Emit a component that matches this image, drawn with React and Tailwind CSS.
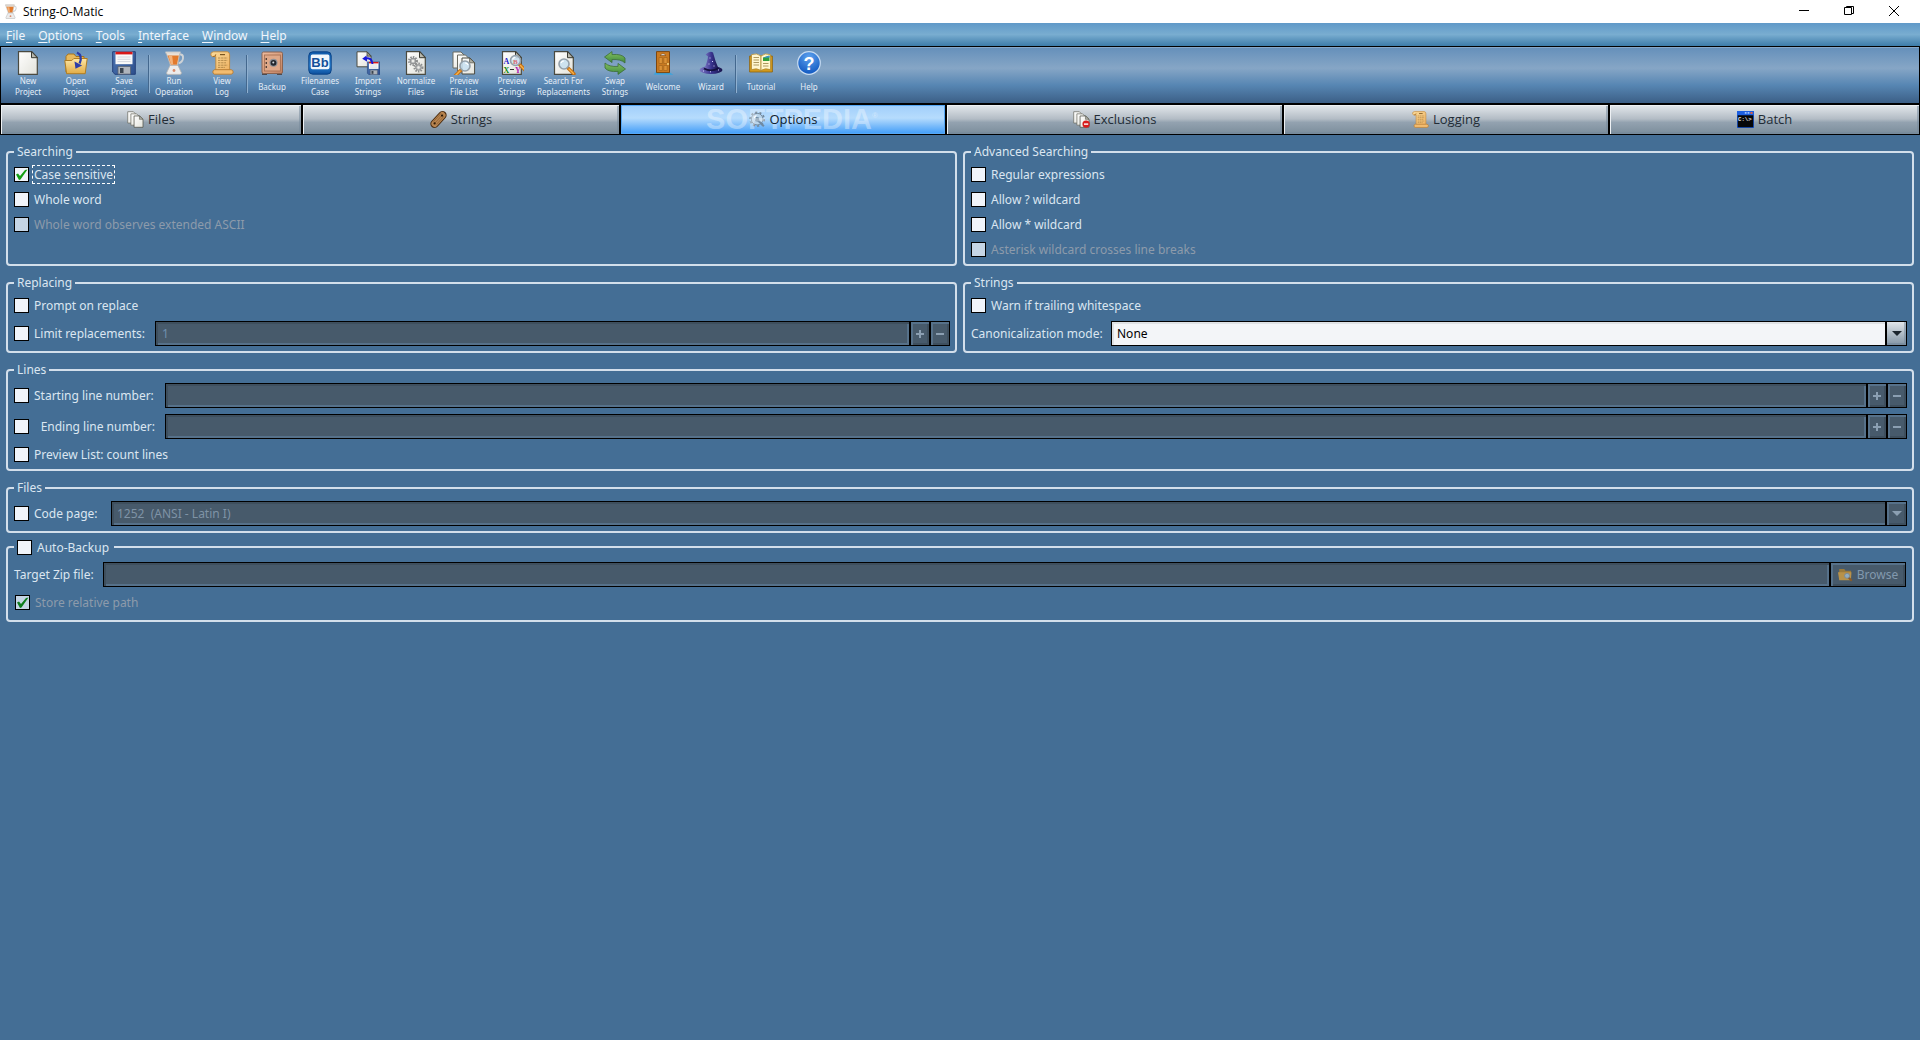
import React, { useState } from 'react';

const Svg = ({ size = 24, className = '', children }) => (
    <svg width={size} height={size} viewBox="0 0 24 24" className={`shrink-0 ${className}`} aria-hidden="true">
        {children}
    </svg>
);

const Gradients = () => (
    <svg width="0" height="0" className="absolute" aria-hidden="true">
        <defs>
            <linearGradient id="paper" x1="0" y1="0" x2="1" y2="1">
                <stop offset="0" stopColor="#ffffff" />
                <stop offset="1" stopColor="#e2e2da" />
            </linearGradient>
            <linearGradient id="gold" x1="0" y1="0" x2="0" y2="1">
                <stop offset="0" stopColor="#fde7a6" />
                <stop offset="1" stopColor="#e2ac45" />
            </linearGradient>
            <linearGradient id="scroll" x1="0" y1="0" x2="1" y2="1">
                <stop offset="0" stopColor="#fbdc9c" />
                <stop offset="1" stopColor="#eeb263" />
            </linearGradient>
            <linearGradient id="disk" x1="0" y1="0" x2="1" y2="1">
                <stop offset="0" stopColor="#4d77b5" />
                <stop offset="1" stopColor="#2e4f8c" />
            </linearGradient>
            <linearGradient id="safe" x1="0" y1="0" x2="1" y2="1">
                <stop offset="0" stopColor="#f0bd9f" />
                <stop offset="1" stopColor="#c08060" />
            </linearGradient>
            <linearGradient id="blueBox" x1="0" y1="0" x2="0" y2="1">
                <stop offset="0" stopColor="#0f58a8" />
                <stop offset="0.6" stopColor="#2c86d8" />
                <stop offset="1" stopColor="#0d4f9c" />
            </linearGradient>
            <linearGradient id="green" x1="0" y1="0" x2="0" y2="1">
                <stop offset="0" stopColor="#86bf62" />
                <stop offset="1" stopColor="#3d8a3c" />
            </linearGradient>
            <linearGradient id="hat" x1="0" y1="0" x2="1" y2="0">
                <stop offset="0" stopColor="#7d79c4" />
                <stop offset="0.5" stopColor="#3a3590" />
                <stop offset="1" stopColor="#17144c" />
            </linearGradient>
            <radialGradient id="helpBall" cx="0.5" cy="0.25" r="0.8">
                <stop offset="0" stopColor="#5ea2ee" />
                <stop offset="1" stopColor="#0a52bd" />
            </radialGradient>
        </defs>
    </svg>
);

/* Pieces shared by several icons */
const Page = () => (
    <>
        <path d="M2.5 .7h13.3l5.5 5.8v16.8H2.5z" fill="url(#paper)" stroke="#4a4a40" strokeWidth="1.2" />
        <path d="M15.5 .7v6h5.8z" fill="#b9b9ae" stroke="#3a3a32" />
    </>
);

const Glass = ({ x = 0, y = 0 }) => (
    <g transform={`translate(${x} ${y})`}>
        <path d="M4 4l6 6" stroke="#c46f12" strokeWidth="3.4" strokeLinecap="round" />
        <path d="M5 5l4.5 4.5" stroke="#f7b24a" strokeWidth="1.4" strokeLinecap="round" />
        <circle r="5" fill="#c7dff0" fillOpacity="0.85" stroke="#94a0aa" strokeWidth="1.6" />
        <path d="M-3-1a3 3 0 0 1 3-2" stroke="#fff" strokeWidth="1.2" fill="none" />
    </g>
);

const FloppyShape = () => (
    <>
        <path d="M.7 .7h22.6v22.6H3L.7 21z" fill="url(#disk)" stroke="#24407a" />
        <path d="M3.5 .8h17v12.4h-17z" fill="#fafafa" />
        <path d="M3.5 .8h17v2.6h-17z" fill="#d81818" />
        <path d="M5.5 6h13M5.5 8.3h13M5.5 10.6h13" stroke="#c9ced6" strokeWidth="0.8" />
        <path d="M6 15.5h12.5v7.6H6z" fill="#aeb4bc" stroke="#5c6570" strokeWidth="0.8" />
        <path d="M8 17h3.5v5H8z" fill="#3a4450" />
    </>
);

const PageStack = () => (
    <>
        <path d="M1 1h8l4 4v12H1z" fill="url(#paper)" stroke="#6a6a60" />
        <path d="M5.5 4h8l4 4v12h-12z" fill="url(#paper)" stroke="#6a6a60" />
        <path d="M10 7h8l4.6 4.6V23H10z" fill="url(#paper)" stroke="#4a4a40" />
        <path d="M17.6 7v4.8h5z" fill="#b0b0a6" stroke="#4a4a40" strokeWidth="0.7" />
    </>
);

const Blender = ({ size, className }) => (
    <Svg size={size} className={className}>
        <path d="M16 3.5h3q2.5.5 2 4t-4.5 5" fill="none" stroke="#cfd3d6" strokeWidth="1.8" />
        <path d="M4 1.5h14l-2.5 13h-7z" fill="#e9e2da" stroke="#b9b3ac" strokeWidth="0.8" />
        <path d="M5.6 4.5h11.2l-1.9 9.2H9z" fill="#e27a2c" />
        <path d="M6.6 5h3.6l1 8.5H9z" fill="#f4b27a" />
        <path d="M3.5 .6h15v1.8h-15z" fill="#d9d4cf" />
        <path d="M8 14.4h8l3.4 7.4q.2 1.6-1.4 1.6H6q-1.8 0-1.4-1.6z" fill="#ececec" stroke="#b3b3b3" strokeWidth="0.8" />
        <circle cx="12" cy="19.5" r="1.4" fill="#d98a6a" />
    </Svg>
);

const NewIcon = () => <Svg><Page /></Svg>;

const OpenIcon = () => (
    <Svg>
        <path d="M2 21V5.5L4 3h6l2 2.5h8V12" fill="#e8b95c" stroke="#a8741c" />
        <path d="M.8 9.5h7l2-2h13.4l-2 15.2H2.6z" fill="url(#gold)" stroke="#b07d22" />
        <path d="M13 1.5q6 3 2.6 11" fill="none" stroke="#2b3da8" strokeWidth="2.2" />
        <path d="M10.5 10.5l1 7.3 6.6-3.4z" fill="#2b3da8" />
    </Svg>
);

const SaveIcon = () => <Svg><FloppyShape /></Svg>;

const ScrollIcon = ({ size }) => (
    <Svg size={size}>
        <path d="M3.6 .8h13.8q2.2.3 2.2 3v15.4H5.8V5.6H2.6Q.6 5 .8 3T3.6 .8z" fill="url(#scroll)" stroke="#c48a3c" strokeWidth="0.9" />
        <path d="M5.8 3.3q.4 2.3-3 2.3" fill="none" stroke="#a96d24" />
        <path d="M4.6 18.7h16.6q2 .5 2 2.3t-2 2.2H4.6q-1.8-.4-1.8-2.2t1.8-2.3z" fill="#f3bc70" stroke="#b87a30" strokeWidth="0.9" />
        <path d="M10 3.6h5" stroke="#7a5520" strokeWidth="1.2" />
        <path d="M8 7h9.5M8 9.4h9.5M8 11.8h8M8 14.2h9.5M8 16.4h7" stroke="#ad8446" strokeWidth="0.9" strokeDasharray="2.4 .7" />
    </Svg>
);

const BackupIcon = () => (
    <Svg>
        <path d="M2 22h5v2H2zM17 22h5v2h-5z" fill="#4c4a50" />
        <rect x="2" y="1" width="20.5" height="21.5" rx="1.5" fill="url(#safe)" stroke="#8a6350" />
        <rect x="4.4" y="4" width="16" height="16" fill="#dfa888" stroke="#a87052" strokeWidth="0.9" />
        <circle cx="13.5" cy="11.8" r="4" fill="#8b8f96" />
        <circle cx="13.5" cy="11.8" r="2.9" fill="#23272d" />
        <circle cx="13.3" cy="11.6" r="1" fill="#d5d9de" />
        <path d="M6.3 7v2M6.3 11v2M6.3 15v2" stroke="#4d3b33" strokeWidth="1.3" />
    </Svg>
);

const CaseIcon = () => (
    <Svg>
        <rect x=".8" y=".8" width="22.4" height="22.4" rx="4" fill="url(#blueBox)" stroke="#0b4488" />
        <rect x="2.8" y="3.4" width="18.6" height="14.8" rx="1.6" fill="#f2f7fc" />
        <text x="12" y="15.6" textAnchor="middle" fontFamily="Liberation Sans, Arial, sans-serif" fontSize="13" fontWeight="700" fill="#14509a">Bb</text>
    </Svg>
);

const ImportIcon = () => (
    <Svg>
        <path d="M1 .8h10l4 4v11H1z" fill="url(#paper)" stroke="#4a4a40" />
        <path d="M11 .8v4.4h4z" fill="#9a9a90" stroke="#3a3a32" strokeWidth="0.7" />
        <g transform="translate(11 10.5) scale(.56)"><FloppyShape /></g>
        <path d="M9 7.5q7-1.5 7.5 5.5" fill="none" stroke="#1616d8" strokeWidth="2" />
        <path d="M10.5 4.5L6.2 7.8l5 3z" fill="#1616d8" />
    </Svg>
);

const Gear = ({ cx, cy, r }) => (
    <>
        <circle cx={cx} cy={cy} r={r} fill="none" stroke="#8d8f90" strokeWidth="2" strokeDasharray="1.5 1.1" />
        <circle cx={cx} cy={cy} r={r - 1.2} fill="#b9bbbc" stroke="#8b8d8e" strokeWidth="1" />
        <circle cx={cx} cy={cy} r="1.2" fill="#eeeeea" />
    </>
);

const NormalizeIcon = () => (
    <Svg>
        <Page />
        <Gear cx={9} cy={10} r={4} />
        <Gear cx={14.5} cy={16.5} r={4} />
    </Svg>
);

const PreviewListIcon = () => (
    <Svg>
        <PageStack />
        <g transform="translate(13 15) scale(-1 1)"><Glass /></g>
    </Svg>
);

const PreviewStringsIcon = () => (
    <Svg>
        <Page />
        <g fontFamily="Liberation Serif, serif" fontSize="8" fontWeight="700">
            <text x="3.5" y="13" fill="#1c1cc8">A</text>
            <text x="3.5" y="21.5" fill="#108a10">X</text>
            <text x="15" y="21.5" fill="#b01cb0">Y</text>
        </g>
        <path d="M10 18.5h4" stroke="#333" />
        <Glass x={15.5} y={9.5} />
        <text x="13" y="12.5" fontFamily="Liberation Serif, serif" fontSize="7" fontWeight="700" fill="#d86a70">B</text>
    </Svg>
);

const SearchIcon = () => (
    <Svg>
        <Page />
        <Glass x={12} y={13} />
    </Svg>
);

const SwapIcon = () => (
    <Svg>
        <path d="M1.5 6L9 .6v3q9.500-1 13 3.400v5q-4-4-13-3.400v3z" fill="url(#green)" stroke="#3c6d36" strokeWidth="0.8" />
        <path d="M22.5 18L15 23.400v-3Q5.500 21.400 2 17v-5q4 4 13 3.400v-3z" fill="url(#green)" stroke="#3c6d36" strokeWidth="0.8" />
    </Svg>
);

const DoorIcon = () => (
    <Svg>
        <path d="M5 20.500h12l5.500 3.300H2.500z" fill="#3ba3dc" />
        <path d="M5.500 .6h13v21h-13z" fill="#c97a22" stroke="#7d4710" />
        <path d="M9 4.500q3-3.600 6 0z" fill="#dfeefa" stroke="#7d4710" strokeWidth="0.6" />
        <path d="M8 6.500h3.400v6H8zM12.800 6.500h3.400v6h-3.400zM8 14.500h3.400v5H8zM12.800 14.500h3.400v5h-3.400z" fill="#dc9236" stroke="#a8681e" strokeWidth="0.8" />
        <circle cx="17" cy="13" r=".9" fill="#ffe38a" />
    </Svg>
);

const WizardIcon = () => (
    <Svg>
        <ellipse cx="12" cy="19" rx="11.5" ry="4" fill="url(#hat)" />
        <path d="M5 18Q8.500 11 9 5.500L6.500 3.500Q11-.5 14 1.500q2 8 5.500 16-7 4.500-14.500.5z" fill="url(#hat)" />
        <path d="M5 17.500q7 4 14.500-.3" fill="none" stroke="#15123f" strokeWidth="1.8" />
        <path d="M10.500 7h1M13 10.500h1M9.500 13h1M14.500 15h1M4 20h1M11 20.800h1M19 19h1" stroke="#d5d2ff" strokeWidth="1" />
    </Svg>
);

const BookIcon = () => (
    <Svg>
        <path d="M.6 5h22.800v16H.6z" fill="#d29a1e" stroke="#8d620c" strokeWidth="0.8" />
        <path d="M12 5Q8 1.600 2.500 3.600v15Q8 16.600 12 19.500z" fill="#fff6cf" stroke="#b08a34" strokeWidth="0.8" />
        <path d="M12 5q4-3.400 9.500-1.400v15Q16 16.600 12 19.500z" fill="#fff6cf" stroke="#b08a34" strokeWidth="0.8" />
        <path d="M4.500 6.500h5.500M4.500 9h5.500M4.500 11.500h5.500M4.500 14h5.500M14 12.500h5.500M14 15h5.500" stroke="#a58e54" strokeWidth="0.9" />
        <path d="M14 10V6.500l6.500-2V10z" fill="#2f9e3a" />
        <path d="M14 6.800l6.500-2.300v2z" fill="#3a8fe0" />
    </Svg>
);

const HelpIcon = () => (
    <Svg>
        <circle cx="12" cy="12" r="11.3" fill="url(#helpBall)" stroke="#c8dcf2" strokeWidth="1.2" />
        <text x="12" y="18.5" textAnchor="middle" fontFamily="Liberation Sans, Arial, sans-serif" fontSize="18" fontWeight="700" fill="#fff">?</text>
    </Svg>
);

const FilesIcon = () => <Svg size={17}><PageStack /></Svg>;

const StringIcon = () => (
    <Svg size={17}>
        <path d="M6.500 18L17.500 6" stroke="#4a2c10" strokeWidth="12" strokeLinecap="round" />
        <path d="M6.500 18L17.500 6" stroke="#b98550" strokeWidth="9" strokeLinecap="round" />
        <path d="M9 19L20 7M5 15L16 3M7 17L18 5" stroke="#84562a" strokeWidth="0.9" />
        <circle cx="6.5" cy="17.5" r="1.6" fill="#2c1a08" />
        <circle cx="17" cy="6.5" r="1.6" fill="#2c1a08" />
    </Svg>
);

const OptionsIcon = () => (
    <Svg size={17}>
        <circle cx="11.5" cy="11.5" r="9.8" fill="none" stroke="#72889b" strokeWidth="2.4" strokeDasharray="3 3.15" />
        <circle cx="11.5" cy="11.5" r="8.2" fill="#b9d5ec" stroke="#72889b" strokeWidth="1.4" />
        <path d="M10 8l4 1 .5 4 7.500 7.500-2 2-7.500-7.500-4-1z" fill="#6f8aa3" />
        <path d="M7.500 10a4 4 0 0 1 3-3.500" stroke="#fff" strokeWidth="1.6" fill="none" />
    </Svg>
);

const ExclusionsIcon = () => (
    <Svg size={17}>
        <PageStack />
        <circle cx="18.5" cy="18.5" r="5.2" fill="#d81c1c" />
        <path d="M15.500 18.500h6" stroke="#fff" strokeWidth="2" />
    </Svg>
);

const BatchIcon = () => (
    <Svg size={17}>
        <path d="M0 0h24v24H0z" fill="#1d5fe0" />
        <path d="M1 6h22v17H1z" fill="#060608" />
        <path d="M11 1.500h2.500v2.500H11zM15 1.500h2.500v2.500H15z" fill="#9dc1ff" />
        <path d="M19 1.500h3v2.500h-3z" fill="#f0603c" />
        <text x="1.5" y="13.5" fontFamily="Liberation Mono, monospace" fontSize="8" fontWeight="700" fill="#e6e6e6">C:\&gt;</text>
    </Svg>
);

const BrowseIcon = () => (
    <Svg size={15}>
        <path d="M2 20V3h8l2 3h9v14z" fill="#9a7a3c" />
        <path d="M0 8.500h21.500L20.500 21H2z" fill="#b8924a" />
        <path d="M16 16l6 6" stroke="#8a5a28" strokeWidth="3" />
        <circle cx="14.5" cy="14" r="4" fill="#93adc0" stroke="#7b8790" strokeWidth="1.5" />
    </Svg>
);

const menus = ['File', 'Options', 'Tools', 'Interface', 'Window', 'Help'];

const tools = [
    { lines: ['New', 'Project'], Icon: NewIcon },
    { lines: ['Open', 'Project'], Icon: OpenIcon },
    { lines: ['Save', 'Project'], Icon: SaveIcon },
    null,
    { lines: ['Run', 'Operation'], Icon: Blender },
    { lines: ['View', 'Log'], Icon: ScrollIcon },
    null,
    { lines: ['Backup'], Icon: BackupIcon },
    { lines: ['Filenames', 'Case'], Icon: CaseIcon },
    { lines: ['Import', 'Strings'], Icon: ImportIcon },
    { lines: ['Normalize', 'Files'], Icon: NormalizeIcon },
    { lines: ['Preview', 'File List'], Icon: PreviewListIcon },
    { lines: ['Preview', 'Strings'], Icon: PreviewStringsIcon },
    { lines: ['Search For', 'Replacements'], Icon: SearchIcon, wide: true },
    { lines: ['Swap', 'Strings'], Icon: SwapIcon },
    { lines: ['Welcome'], Icon: DoorIcon },
    { lines: ['Wizard'], Icon: WizardIcon },
    null,
    { lines: ['Tutorial'], Icon: BookIcon },
    { lines: ['Help'], Icon: HelpIcon },
];

const tabs = [
    { name: 'Files', Icon: FilesIcon, width: 'flex-[300]' },
    { name: 'Strings', Icon: StringIcon, width: 'flex-[316]' },
    { name: 'Options', Icon: OptionsIcon, width: 'flex-[324]' },
    { name: 'Exclusions', Icon: ExclusionsIcon, width: 'flex-[335]' },
    { name: 'Logging', Icon: ScrollIcon, width: 'flex-[324]' },
    { name: 'Batch', Icon: BatchIcon, width: 'flex-[309]' },
];

const sunken = 'border border-black bg-[#475a6b] shadow-[inset_2px_2px_0_#3e4f5e,inset_-2px_-2px_0_#56718a]';
const raised = 'border border-black bg-[#475a6b] shadow-[inset_2px_2px_0_#56718a,inset_-2px_-2px_0_#3e4f5e]';

const TitleBar = () => (
    <div className="flex h-[23px] items-center bg-white pl-[3px] font-['Open_Sans','Noto_Sans',sans-serif] text-[12px] text-black">
        <Blender size={15} />
        <span className="ml-[5px] flex-1">String-O-Matic</span>
        <button aria-label="Minimize" className="flex h-full w-[45px] items-center justify-center">
            <svg width="10" height="11" viewBox="0 0 10 11"><path d="M0 4.500h10" stroke="#000" /></svg>
        </button>
        <button aria-label="Restore" className="flex h-full w-[45px] items-center justify-center">
            <svg width="10" height="11" viewBox="0 0 10 11" fill="none" stroke="#000">
                <path d="M.5 1.500h7v7h-7zM2.500 1.500v-1h7v7h-2" />
            </svg>
        </button>
        <button aria-label="Close" className="mr-[3px] flex h-full w-[46px] items-center justify-center">
            <svg width="10" height="11" viewBox="0 0 10 11"><path d="M0 0l10 10M10 0L0 10" stroke="#000" /></svg>
        </button>
    </div>
);

const MenuBar = () => (
    <nav className="flex h-[23px] items-center gap-px bg-linear-to-b from-[#6099c8] via-[#79add0] to-[#3c7ca9] pt-[2px] text-[12px] text-[#f0f6fc]">
        {menus.map((menu) => (
            <button key={menu} className="px-[6px]">
                <span className="underline underline-offset-2">{menu[0]}</span>{menu.slice(1)}
            </button>
        ))}
    </nav>
);

const Toolbar = () => (
    <div className="flex h-[57px] items-start border-x border-t border-black bg-[linear-gradient(to_bottom,#648fba,#86a6c6_38%,#5786b3_68%,#3c5f86)] pt-[4px] pl-[3px] shadow-[inset_0_1px_0_#86a8c9]">
        {tools.map((tool, i) =>
            tool ? (
                <button
                    key={i}
                    className={`flex flex-col items-center text-[8px] leading-[11px] text-[#e4edf7] ${tool.wide ? 'w-[55px]' : 'w-[48px]'}`}
                >
                    <tool.Icon />
                    <span className="flex h-[22px] flex-col justify-center whitespace-nowrap">
                        {tool.lines.map((line) => <span key={line}>{line}</span>)}
                    </span>
                </button>
            ) : (
                <div key={i} className="mt-[4px] h-[38px] w-[2px] border-l border-[#44688e] bg-[#8fb0d0]" />
            )
        )}
    </div>
);

const TabBar = ({ active, onSelect }) => (
    <div role="tablist" className="flex h-[32px] gap-[2px] border-x border-t-2 border-b border-black bg-black">
        {tabs.map(({ name, Icon, width }) => (
            <button
                key={name}
                role="tab"
                aria-selected={active === name}
                onClick={() => onSelect(name)}
                className={`relative flex items-center justify-center gap-[4px] font-['Open_Sans','Noto_Sans',sans-serif] text-[13px] ${width} ${
                    active === name
                        ? 'bg-[linear-gradient(to_bottom,#a0cefb,#b6dcfd_45%,#74b8fa_75%,#3f9cf8)] text-[#10202e] shadow-[inset_0_0_0_1px_#57a8f5]'
                        : 'bg-[linear-gradient(to_bottom,#e4e8ec,#b3bcc5_48%,#93a2b0_60%,#7b8d9b)] text-[#222c36] shadow-[inset_1px_1px_0_#eef1f4,inset_-2px_-2px_0_#73879a80]'
                }`}
            >
                {name === 'Options' && (
                    <span aria-hidden="true" className="absolute inset-0 flex items-center justify-center overflow-hidden pl-[18px] font-['Liberation_Sans',Arial,sans-serif] text-[29px] font-bold leading-none text-white/35">
                        SOFTPEDIA<sup className="text-[8px]">®</sup>
                    </span>
                )}
                <Icon size={17} />
                <span className="relative">{name}</span>
            </button>
        ))}
    </div>
);

const Group = ({ title, className, children }) => (
    <fieldset className={`flex min-w-0 flex-col rounded-[4px] border-2 border-[#d3dfeb] pr-[5px] pl-[6px] ${className}`}>
        <legend className="h-[18px] px-[3px] leading-[18px]">{title}</legend>
        {children}
    </fieldset>
);

const Check = ({ label, disabled, defaultChecked, focused, className = '' }) => (
    <label className={`flex h-[15px] shrink-0 items-center gap-[3px] whitespace-nowrap ${disabled ? 'text-[#8d9bab]' : ''} ${className}`}>
        <span className="relative size-[15px] shrink-0">
            <input
                type="checkbox"
                disabled={disabled}
                defaultChecked={defaultChecked}
                className="peer block size-[15px] appearance-none border border-black bg-[#f0f4fa] disabled:bg-[#c5d5e5]"
            />
            <svg viewBox="0 0 15 15" className="pointer-events-none absolute inset-0 hidden size-[15px] peer-checked:block">
                <path d="M2 7.500l2-1 2 2.500 5-6 2.500-.5L6.500 12.500l-1.500 .5z" fill={disabled ? '#0d7c1c' : '#14a014'} />
            </svg>
        </span>
        <span className={`border border-dashed px-[1px] leading-[17px] ${focused ? 'border-white' : 'border-transparent'}`}>{label}</span>
    </label>
);

const Spinner = ({ label, value }) => (
    <div className="flex h-[25px] flex-1">
        <input aria-label={label} disabled defaultValue={value} className={`min-w-0 flex-1 px-[6px] text-[#6f8fae] ${sunken}`} />
        <button aria-label="Increase" disabled className={`flex w-[20px] items-center justify-center ${raised}`}>
            <svg width="8" height="8" viewBox="0 0 8 8"><path d="M0 4h8M4 0v8" stroke="#8b9fb2" strokeWidth="2" /></svg>
        </button>
        <button aria-label="Decrease" disabled className={`flex w-[20px] items-center justify-center ${raised}`}>
            <svg width="8" height="8" viewBox="0 0 8 8"><path d="M0 4h8" stroke="#8b9fb2" strokeWidth="2" /></svg>
        </button>
    </div>
);

const Select = ({ id, label, option, disabled }) => (
    <div className="relative flex h-[25px] flex-1">
        <select
            id={id}
            aria-label={label}
            disabled={disabled}
            className={`w-full appearance-none px-[5px] opacity-100 ${
                disabled
                    ? `text-[#7f93a6] ${sunken}`
                    : 'border border-black bg-[#f3f5f8] text-black shadow-[inset_2px_2px_0_#dfe2e5]'
            }`}
        >
            <option>{option}</option>
        </select>
        <span
            className={`pointer-events-none absolute inset-y-0 right-0 flex w-[22px] items-center justify-center border-l-2 ${
                disabled ? raised : 'border border-black bg-linear-to-b from-[#e1e6ea] to-[#8395a5] shadow-[inset_-2px_-2px_0_#6f849880]'
            }`}
        >
            <svg width="10" height="5" viewBox="0 0 10 5"><path d="M0 0h10L5 5z" fill={disabled ? '#8b9fb2' : '#1c262e'} /></svg>
        </span>
    </div>
);

const OptionsPanel = () => (
    <main className="flex flex-col px-[6px] pt-[8px] text-[12px] text-[#dbe6f1]">
        <div className="grid grid-cols-2 gap-x-[6px] gap-y-[8px]">
            <Group title="Searching" className="gap-[10px] pt-[6px] pb-[7px]">
                <Check label="Case sensitive" defaultChecked focused className="self-start" />
                <Check label="Whole word" />
                <Check label="Whole word observes extended ASCII" disabled />
            </Group>
            <Group title="Advanced Searching" className="gap-[10px] pt-[6px] pb-[7px]">
                <Check label="Regular expressions" />
                <Check label="Allow ? wildcard" />
                <Check label="Allow * wildcard" />
                <Check label="Asterisk wildcard crosses line breaks" disabled />
            </Group>
            <Group title="Replacing" className="gap-[8px] pt-[6px] pb-[5px]">
                <Check label="Prompt on replace" />
                <div className="flex items-center">
                    <Check label="Limit replacements:" className="w-[141px]" />
                    <Spinner label="Replacement limit" value="1" />
                </div>
            </Group>
            <Group title="Strings" className="gap-[8px] pt-[6px] pb-[5px]">
                <Check label="Warn if trailing whitespace" />
                <div className="flex items-center">
                    <label htmlFor="canon" className="w-[140px] shrink-0 whitespace-nowrap">Canonicalization mode:</label>
                    <Select id="canon" option="None" />
                </div>
            </Group>
        </div>

        <Group title="Lines" className="mt-[8px] pt-[4px] pb-[7px]">
            <div className="flex items-center">
                <Check label="Starting line number:" className="w-[151px]" />
                <Spinner label="Starting line" />
            </div>
            <div className="mt-[6px] mb-[8px] flex items-center">
                <Check label="Ending line number:" className="w-[151px] justify-between pr-[8px]" />
                <Spinner label="Ending line" />
            </div>
            <Check label="Preview List: count lines" />
        </Group>

        <Group title="Files" className="mt-[8px] pt-[4px] pb-[5px]">
            <div className="flex items-center">
                <Check label="Code page:" className="w-[97px]" />
                <Select label="Code page" option={'1252\u00a0 (ANSI - Latin I)'} disabled />
            </div>
        </Group>

        <Group title={<Check label="Auto-Backup" className="mt-[2px]" />} className="mt-[5px] gap-[8px] pt-[6px] pb-[10px]">
            <div className="flex items-center">
                <label htmlFor="zip" className="w-[89px] shrink-0 whitespace-nowrap">Target Zip file:</label>
                <input id="zip" disabled className={`h-[25px] min-w-0 flex-1 px-[6px] ${sunken}`} />
                <button disabled className={`mr-[1px] flex h-[25px] w-[76px] items-center justify-center gap-[4px] text-[#8299ae] ${raised}`}>
                    <BrowseIcon />
                    Browse
                </button>
            </div>
            <Check label="Store relative path" disabled defaultChecked className="ml-[1px]" />
        </Group>
    </main>
);

const App = () => {
    const [active, setActive] = useState('Options');

    return (
        <div className="min-h-screen bg-[#446e95] font-['Noto_Sans','Open_Sans',sans-serif]">
            <Gradients />
            <TitleBar />
            <MenuBar />
            <Toolbar />
            <TabBar active={active} onSelect={setActive} />
            <OptionsPanel />
        </div>
    );
};

export default App;
